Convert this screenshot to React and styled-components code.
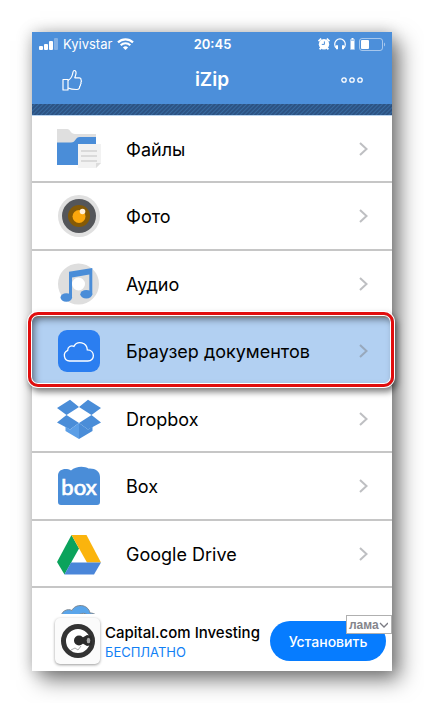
import styled, { createGlobalStyle, css } from "styled-components";

const GlobalStyle = createGlobalStyle`
  * {
    box-sizing: border-box;
  }

  body {
    margin: 0;
    background: #fff;
    font-family: Inter, "Liberation Sans", sans-serif;
    color: #000;
  }

  button {
    font-family: inherit;
    border: 0;
    padding: 0;
    background: none;
    cursor: pointer;
  }
`;

const Page = styled.main`
  padding: 32px;
`;

const Phone = styled.div`
  background: #fff;
  box-shadow:
    0 0 14px rgba(0, 0, 0, 0.2),
    8px 9px 20px rgba(0, 0, 0, 0.5);
`;

const Header = styled.header`
  background: #4c8fda;
  color: #fff;
`;

const StatusBar = styled.div`
  display: grid;
  grid-template-columns: 1fr auto 1fr;
  align-items: center;
  height: 24px;
  padding: 0 6px 0 7px;
  font-size: 13px;
`;

const StatusGroup = styled.div`
  display: flex;
  align-items: center;
  justify-content: ${({ $end }) => ($end ? "flex-end" : "flex-start")};
  gap: ${({ $end }) => ($end ? "4px" : "5px")};
`;

const Time = styled.time`
  font-weight: 600;
`;

const NavBar = styled.div`
  display: grid;
  grid-template-columns: 1fr auto 1fr;
  align-items: center;
  height: 48px;
  padding: 0 29px;
`;

const NavButton = styled.button`
  display: flex;
  justify-self: ${({ $end }) => ($end ? "end" : "start")};
  color: #fff;
`;

const Title = styled.h1`
  margin: 0;
  font-size: 19px;
  line-height: 24px;
  font-weight: 600;
`;

const Stripe = styled.div`
  height: 12px;
  border-bottom: 1px solid #b9d3ef;
  background: repeating-linear-gradient(
    135deg,
    #2c5283 0,
    #2c5283 1px,
    #376a9f 2px,
    #2c5283 3px
  );
`;

const List = styled.ul`
  margin: 0;
  padding: 0;
  list-style: none;
`;

const Item = styled.li`
  position: relative;
  height: 67px;
  border-bottom: 2px solid #c6c6c6;

  &:nth-child(even) {
    height: 68px;
  }

  &:last-child {
    height: 26px;
    border: 0;
    overflow: hidden;
  }

  ${({ $active }) =>
    $active &&
    css`
      z-index: 1;
      background: #b2d0f2;

      /* callout frame */
      &::after {
        content: "";
        position: absolute;
        inset: -6px -2px -3px -4px;
        border: 3px solid #e10d0d;
        border-radius: 10px;
        box-shadow:
          0 0 0 1px #fff,
          inset 0 0 0 1px #fff,
          inset 3px 4px 7px rgba(0, 0, 0, 0.5),
          2px 4px 6px 1px rgba(0, 0, 0, 0.5);
        pointer-events: none;
      }
    `}
`;

const RowButton = styled.button`
  display: flex;
  align-items: center;
  gap: 25px;
  width: 100%;
  height: 66px;
  padding: 0 23px 0 25px;
  font-size: 18px;
  text-align: left;
`;

const RowLabel = styled.span`
  flex: 1;
`;

const RowIcon = styled.svg`
  flex: none;
  width: 44px;
  height: 44px;
`;

const Banner = styled.aside`
  position: relative;
  display: flex;
  align-items: center;
  gap: 5px;
  height: 57px;
  padding: 0 6px 3px 23px;
  background: #fff;
`;

const AppIcon = styled.div`
  display: flex;
  align-items: center;
  justify-content: center;
  flex: none;
  width: 45px;
  height: 46px;
  border-radius: 5px;
  background: #fbfbfb;
  box-shadow: 0 1px 3px rgba(0, 0, 0, 0.4);
`;

const BannerText = styled.div`
  flex: 1;
  min-width: 0;
  padding-top: 2px;
  white-space: nowrap;
`;

const BannerTitle = styled.div`
  font-size: 15px;
  line-height: 20px;
  font-weight: 500;
`;

const BannerPrice = styled.div`
  font-size: 13px;
  line-height: 18px;
  color: #1180f5;
`;

const InstallButton = styled.button`
  flex: none;
  width: 116px;
  height: 40px;
  border-radius: 20px;
  background: #067cff;
  color: #fff;
  font-size: 14px;
  font-weight: 500;
`;

const AdBadge = styled.button`
  position: absolute;
  top: 1px;
  right: 0;
  display: flex;
  align-items: center;
  justify-content: space-between;
  width: 46px;
  height: 19px;
  padding: 0 3px 0 2px;
  border: 1px solid #b0b0b0;
  background: #fff;
  color: #85858b;
  font-family: "Liberation Sans", sans-serif;
  font-size: 12px;
  font-weight: 700;
`;

const SignalIcon = () => (
  <svg width="19" height="12" fill="#fff">
    <rect x="0" y="8" width="4" height="4" rx="1" />
    <rect x="5" y="6" width="4" height="6" rx="1" />
    <rect x="10" y="3" width="4" height="9" rx="1" />
    <rect x="15" y="0" width="4" height="12" rx="1" opacity="0.3" />
  </svg>
);

const WifiIcon = () => (
  <svg width="17" height="12" viewBox="0 0 17 12" fill="none" stroke="#fff" strokeWidth="2.2">
    <path d="M1 4.4a10.8 10.8 0 0 1 15 0" />
    <path d="M3.7 7.2a6.9 6.9 0 0 1 9.6 0" />
    <path d="M8.5 12 5.9 9.4a3.8 3.8 0 0 1 5.2 0z" fill="#fff" stroke="none" />
  </svg>
);

const AlarmIcon = () => (
  <svg width="12" height="12" viewBox="0 0 12 12" fill="#fff">
    <circle cx="6" cy="6.2" r="5.2" />
    <path d="M.5 3.2 3.2.6M11.5 3.2 8.8.6M1.6 11.4l1.6-1.8M10.4 11.4 8.8 9.6" stroke="#fff" strokeWidth="1.8" />
    <path d="M6.4 3.4v3H3.8" fill="none" stroke="#4c8fda" />
  </svg>
);

const HeadphonesIcon = () => (
  <svg width="12" height="12" viewBox="0 0 12 12" fill="none" stroke="#fff">
    <path d="M2.6 10.4C1 9 .7 7.5.7 6.2a5.3 5.3 0 0 1 10.6 0c0 1.3-.3 2.8-1.9 4.2" strokeWidth="1.2" />
    <path d="M3 7.3v4M9 7.3v4" strokeWidth="2" />
  </svg>
);

const HeadsetBattery = () => (
  <svg width="5" height="12" fill="#fff">
    <path d="M1.5 0h2v1.5h-2z" />
    <rect x="0" y="1" width="5" height="11" rx="1" opacity="0.5" />
    <rect x="1" y="3" width="3" height="8" />
  </svg>
);

const BatteryIcon = () => (
  <svg width="27" height="13" fill="none">
    <rect x="0.5" y="0.5" width="23" height="12" rx="2.5" stroke="#fff" strokeOpacity="0.5" />
    <rect x="2" y="2" width="8" height="9" rx="1" fill="#fff" />
    <path d="M25 4.5v4c1.5-.7 1.5-3.3 0-4z" fill="#fff" opacity="0.5" />
  </svg>
);

const ThumbIcon = () => (
  <svg width="22" height="22" viewBox="0 0 22 22" fill="none" stroke="#fff" strokeWidth="1.2" strokeLinejoin="round">
    <path d="M2 10.5h5V21H2z" />
    <path d="M7 11.5c2.5-1.5 4.2-4.5 4.7-7 .2-1.5.4-3 1.6-3 1.5 0 1.9 1.4 1.7 3-.2 1.5-.8 3-1.2 4.300h4.200c1.500 0 2.200 1 2 2.100.6.7.5 1.800-.1 2.400.4.8.2 1.700-.5 2.300.2.900-.1 1.600-.8 2 .1 1.800-.8 2.900-2.600 2.900-3.500.1-6-.2-9-1.500" />
  </svg>
);

const DotsIcon = () => (
  <svg width="22" height="6" fill="none" stroke="#fff" strokeWidth="1.3">
    <circle cx="3" cy="3" r="2.2" />
    <circle cx="11" cy="3" r="2.2" />
    <circle cx="19" cy="3" r="2.2" />
  </svg>
);

const Chevron = () => (
  <svg width="11" height="14" viewBox="0 0 11 14" fill="none" stroke="#7e8085" strokeOpacity="0.5" strokeWidth="2">
    <path d="m2 1 6.5 6L2 13" />
  </svg>
);

const FilesIcon = () => (
  <RowIcon viewBox="0 0 44 44">
    <path d="M0 2h10c2 0 2.5 1 3.5 2.5S16 7 18 7h21v12H0z" fill="#dfdfdf" />
    <path d="M0 15.5h14c5 0 4-5.5 9-5.5h16v28H0z" fill="#4a8dd8" />
    <path d="M21 17h23v19l-5 5H21z" fill="#f2f2f2" />
    <path d="M39 41v-5h5z" fill="#dcdcdc" />
    <path d="M24 24h16M24 29h16M24 34h16" stroke="#c2c2c2" />
  </RowIcon>
);

const PhotoIcon = () => (
  <RowIcon viewBox="0 0 44 44">
    <circle cx="22" cy="22" r="21" fill="#e0e0e0" />
    <circle cx="22" cy="22" r="17" fill="#54565a" />
    <circle cx="22" cy="22" r="11" fill="#855a06" />
    <circle cx="22" cy="22.5" r="6.5" fill="#fba70c" />
    <circle cx="25.5" cy="17.5" r="2.8" fill="#fff0db" />
  </RowIcon>
);

const AudioIcon = () => (
  <RowIcon viewBox="0 0 44 44">
    <circle cx="21.5" cy="22" r="13.5" fill="none" stroke="#dedede" strokeWidth="14" />
    <path d="M12 9.7 35.3 6v26h-3V12.5L15 15.6V36h-3z" fill="#4a8dd8" />
    <ellipse cx="9.3" cy="35.5" rx="5.8" ry="4.2" fill="#4a8dd8" />
    <ellipse cx="29.3" cy="32.3" rx="6" ry="4.2" fill="#4a8dd8" />
  </RowIcon>
);

const CloudIcon = () => (
  <RowIcon viewBox="0 0 44 44">
    <rect x="1" y="1" width="42" height="42" rx="9" fill="#2b7ef0" />
    <path
      d="M12.5 32a5.6 5.6 0 0 1-1.8-10.7c0-3.5 3.3-5.2 6.2-3.9 3.4-6.3 13-4.2 13.4 3.4 8 .2 8 11.2.6 11.2z"
      fill="none"
      stroke="#fff"
      strokeWidth="1.3"
    />
  </RowIcon>
);

const DropboxIcon = () => (
  <RowIcon viewBox="0 0 44 44" fill="#4a8dd8">
    <path d="M13 2.7 22 10 9.5 18 0 11zM31 2.7 22 10l12.5 8L44 11z" />
    <path d="M9.5 18 22 26l-9 6.5-13-7zM34.5 18 22 26l9 6.5 13-7z" />
    <path d="M8.5 29.5 13 32.500l9-6.500v16L8.500 34z" fill="#5b9ee6" />
    <path d="M35.5 29.5 31 32.500l-9-6.500v16l13.500-8z" />
  </RowIcon>
);

const BoxIcon = () => (
  <RowIcon viewBox="0 0 44 44">
    <path d="M1 11.5C1 5 9 3.5 14 6.5 19 1.5 28 2 31.5 4.5 38 4 43 7 43 13v25c0 2-1 3-3 3H4c-2 0-3-1-3-3z" fill="#4a8dd8" />
    <text
      x="22"
      y="31"
      textAnchor="middle"
      fill="#fff"
      stroke="#fff"
      strokeWidth="0.7"
      fontFamily="Lato, sans-serif"
      fontSize="22"
    >
      box
    </text>
  </RowIcon>
);

const DriveIcon = () => (
  <RowIcon viewBox="0 0 44 44">
    <path d="M14.5 3 22 16.5 7.5 42.5 0 30z" fill="#0ba35c" />
    <path d="M14.5 3h15L44 30.5H30z" fill="#fbb40d" />
    <path d="M14 30.5h30l-7 12H7.5z" fill="#4a86d9" />
  </RowIcon>
);

const OneDriveIcon = () => (
  <RowIcon viewBox="0 0 44 44" stroke="#7b8792">
    <path d="M4 20c-1-8 7-11 11-8.500C18 4.500 31 4.500 33 14c5 0 8 3 8 7H4z" fill="#5aa5ea" />
    <path d="M12 23c0-7 6-8.500 9-6.500 4-4 12-3 12 6.500z" fill="#b9d6f1" />
  </RowIcon>
);

const CapitalIcon = () => (
  <svg width="36" height="36" viewBox="0 0 36 36">
    <circle cx="18" cy="18" r="14.5" fill="#fff" stroke="#333" strokeWidth="5" />
    <circle cx="19" cy="17.5" r="5" fill="#2b2b2b" />
    <path d="m20 16 7-4 5 1v9l-5 1-7-4z" fill="#2b2b2b" />
    <ellipse cx="28.5" cy="17.5" rx="1.8" ry="2.8" fill="#aaa" />
    <path d="m11 27 4-2 3 2 3-4" fill="none" stroke="#999" strokeWidth="0.8" />
  </svg>
);

const sources = [
  { label: "Файлы", Icon: FilesIcon },
  { label: "Фото", Icon: PhotoIcon },
  { label: "Аудио", Icon: AudioIcon },
  { label: "Браузер документов", Icon: CloudIcon, active: true },
  { label: "Dropbox", Icon: DropboxIcon },
  { label: "Box", Icon: BoxIcon },
  { label: "Google Drive", Icon: DriveIcon },
  { label: "OneDrive", Icon: OneDriveIcon },
];

const App = () => {
  return (
    <Page>
      <GlobalStyle />
      <Phone>
        <Header>
          <StatusBar>
            <StatusGroup>
              <SignalIcon />
              <span>Kyivstar</span>
              <WifiIcon />
            </StatusGroup>
            <Time>20:45</Time>
            <StatusGroup $end>
              <AlarmIcon />
              <HeadphonesIcon />
              <HeadsetBattery />
              <BatteryIcon />
            </StatusGroup>
          </StatusBar>
          <NavBar>
            <NavButton aria-label="Like">
              <ThumbIcon />
            </NavButton>
            <Title>iZip</Title>
            <NavButton $end aria-label="More">
              <DotsIcon />
            </NavButton>
          </NavBar>
          <Stripe />
        </Header>
        <List>
          {sources.map(({ label, Icon, active }) => (
            <Item key={label} $active={active}>
              <RowButton>
                <Icon />
                <RowLabel>{label}</RowLabel>
                <Chevron />
              </RowButton>
            </Item>
          ))}
        </List>
        <Banner>
          <AppIcon>
            <CapitalIcon />
          </AppIcon>
          <BannerText>
            <BannerTitle>Capital.com Investing</BannerTitle>
            <BannerPrice>БЕСПЛАТНО</BannerPrice>
          </BannerText>
          <InstallButton>Установить</InstallButton>
          <AdBadge>
            лама
            <svg width="10" height="6" fill="none" stroke="#7b7b83" strokeWidth="1.3">
              <path d="m1 1 4 4 4-4" />
            </svg>
          </AdBadge>
        </Banner>
      </Phone>
    </Page>
  );
};

export default App;
